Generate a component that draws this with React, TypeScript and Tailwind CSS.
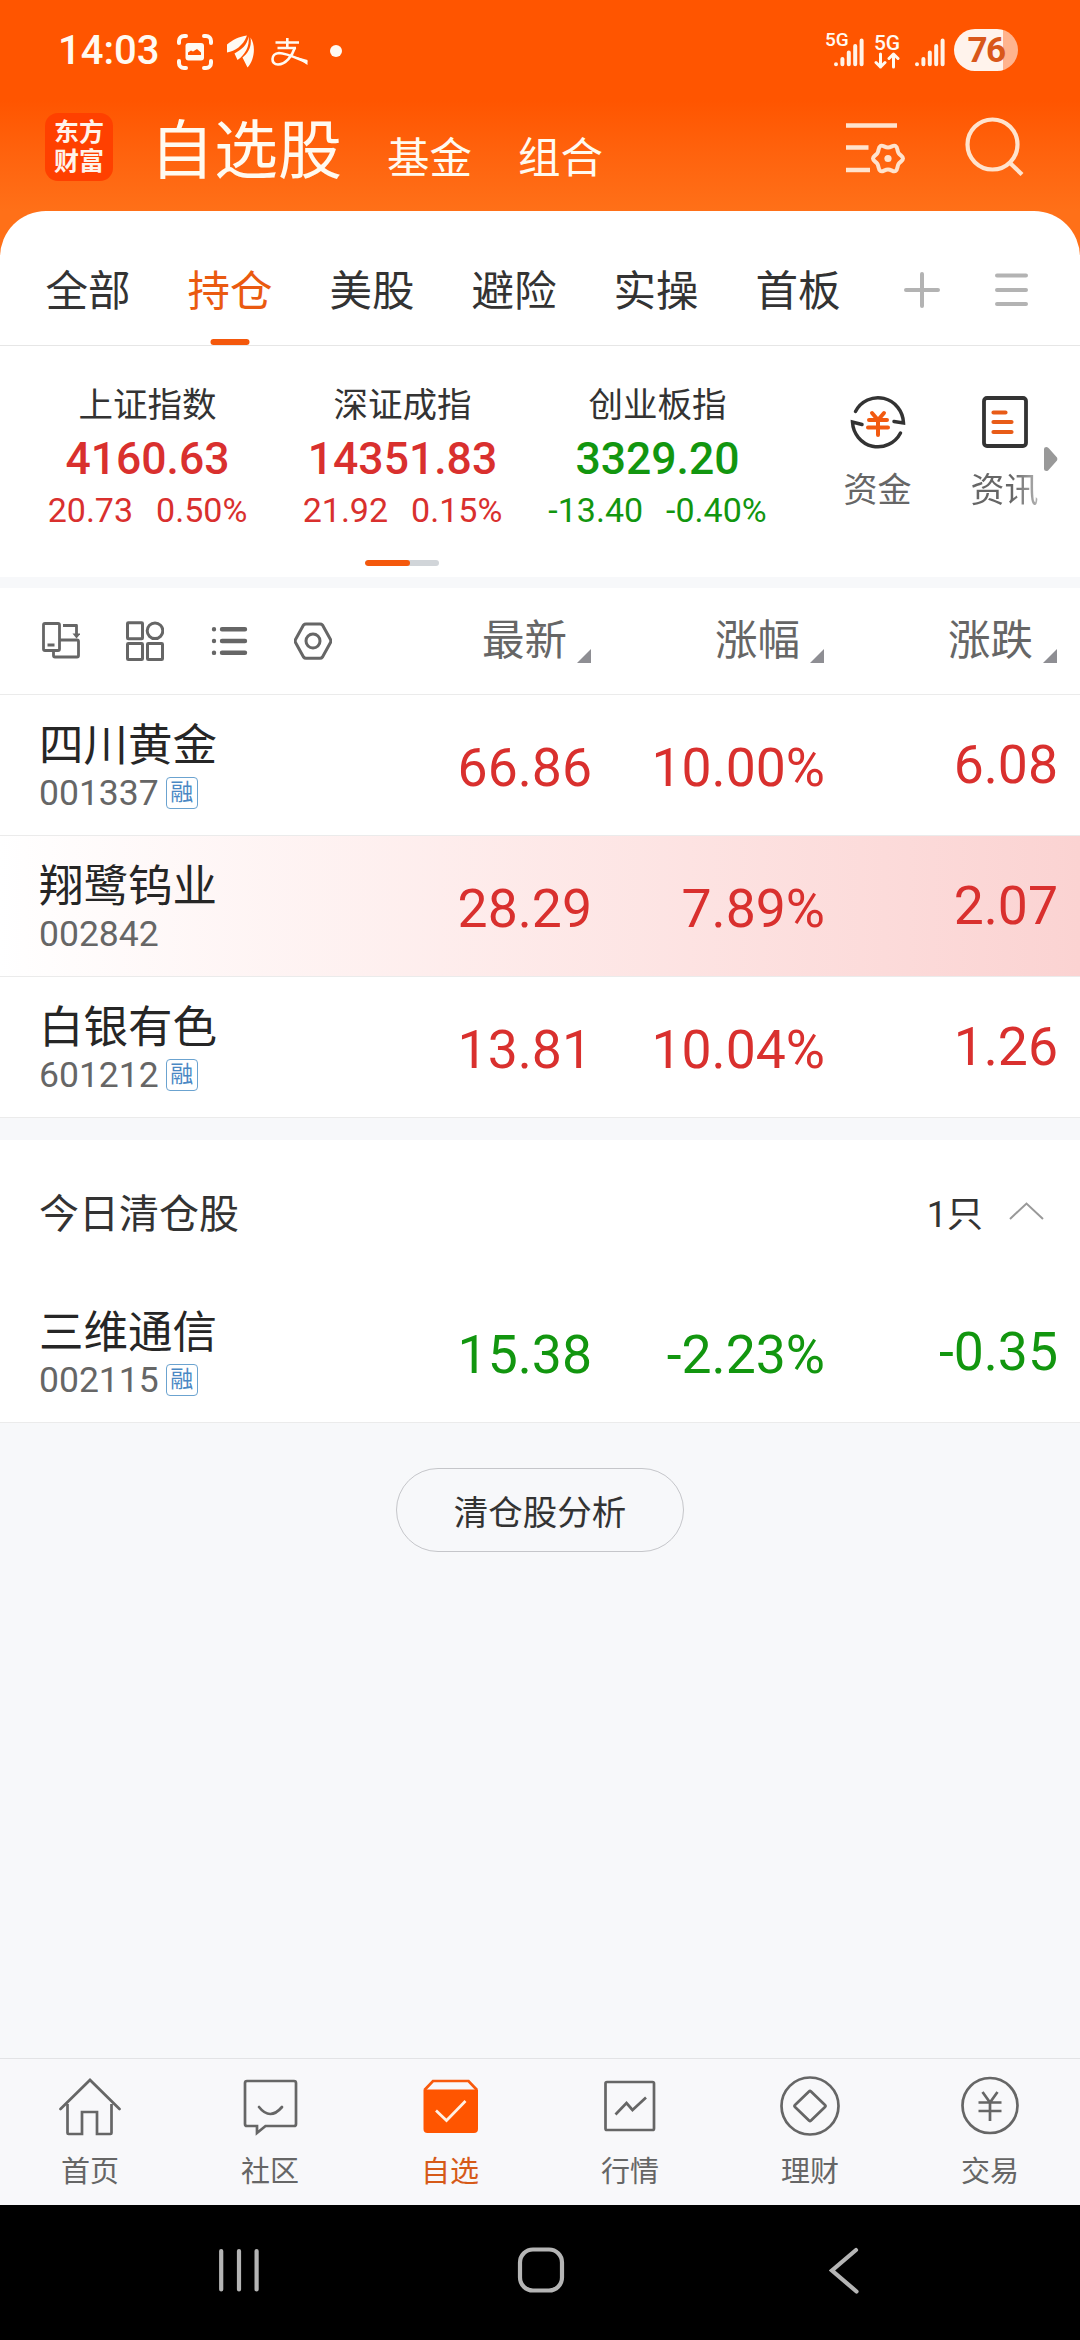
import React from 'react'

type Stock = {
    name: string
    code: string
    margin?: boolean
    price: string
    percent: string
    change: string
    down?: boolean
    flash?: boolean
}

const tabs = ['全部', '持仓', '美股', '避险', '实操', '首板']

const indices = [
    { name: '上证指数', value: '4160.63', change: '20.73', percent: '0.50%', down: false },
    { name: '深证成指', value: '14351.83', change: '21.92', percent: '0.15%', down: false },
    { name: '创业板指', value: '3329.20', change: '-13.40', percent: '-0.40%', down: true },
]

const holdings: Stock[] = [
    {
        name: '四川黄金',
        code: '001337',
        margin: true,
        price: '66.86',
        percent: '10.00%',
        change: '6.08',
    },
    {
        name: '翔鹭钨业',
        code: '002842',
        price: '28.29',
        percent: '7.89%',
        change: '2.07',
        flash: true,
    },
    {
        name: '白银有色',
        code: '601212',
        margin: true,
        price: '13.81',
        percent: '10.04%',
        change: '1.26',
    },
]

const cleared: Stock[] = [
    {
        name: '三维通信',
        code: '002115',
        margin: true,
        price: '15.38',
        percent: '-2.23%',
        change: '-0.35',
        down: true,
    },
]

const Signal: React.FC = () => (
    <svg width="30" height="30" viewBox="0 0 30 30" stroke="#fff3e8" strokeWidth="4" strokeLinecap="round">
        <path d="M2 26.2v.1M8.4 21v5.2M14.8 14.5v11.7M21.2 8v18.2M27.6 2.5v23.7" />
    </svg>
)

const StatusBar: React.FC = () => (
    <div className="h-[100px] flex items-center pl-[58px] pr-[62px] text-[#fffaf2]">
        <span className="text-[40px] leading-none font-medium w-[119px] mt-[2px]">14:03</span>
        <svg width="36" height="36" viewBox="0 0 36 36" fill="none" stroke="currentColor" strokeWidth="4" strokeLinecap="round" className="mt-[3px]">
            <path d="M2 9V7a5 5 0 0 1 5-5h2M27 2h2a5 5 0 0 1 5 5v2M34 27v2a5 5 0 0 1-5 5h-2M9 34H7a5 5 0 0 1-5-5v-2" />
            <rect x="8.500" y="9" width="18.500" height="17.500" rx="3" fill="currentColor" stroke="none" />
            <path d="M11 21v-2.500l3-2 2 1 4-2.500 4 3.500V21z" fill="#ff5500" stroke="none" />
        </svg>
        <svg width="28" height="34" viewBox="0 0 28 34" fill="currentColor" className="ml-[14px] mt-[3px]">
            <path d="M20 .5C12 1.500 6 4.500 0 9.500V17.500C8 16 16 11 20 .5z" />
            <path d="M21.500 1.500C20.500 10 14 15 7.500 18.500L10.500 25C18 20 23 11 21.500 1.500z" />
            <path d="M23.500 2.500C25 12 21 18 15.500 22.500L20.500 32.500C27 26 29.500 11 23.500 2.500z" />
        </svg>
        <svg width="37" height="28" viewBox="0 0 37 28" fill="none" stroke="currentColor" strokeWidth="2.600" className="ml-[16px] mt-[3px]">
            <path d="M4.500 4.500H28M6.500 10H25M16.300 0v10" />
            <path d="M24 9.500C21 18 15 26.500 7 26.500C-.5 26.500-.5 15.500 8 15C16 15 26 20.500 36 24.500" />
            <path d="M24 18.500L36.500 22v5z" fill="currentColor" stroke="none" />
        </svg>
        <span className="ml-[22px] mt-[2px] size-3 rounded-full bg-[#fffaf2]" />
        <div className="ml-auto flex items-center">
            <div className="relative pl-[9px] pt-[6px]">
                <span className="absolute left-0 -top-[2px] text-[19px] leading-none font-medium">5G</span>
                <Signal />
            </div>
            <div className="w-[28px] ml-[9px] mt-[3px] flex flex-col items-center">
                <span className="text-[21px] leading-[18px] font-medium">5G</span>
                <svg width="26" height="17" viewBox="0 0 26 17" fill="none" stroke="currentColor" strokeWidth="3" strokeLinecap="round" strokeLinejoin="round">
                    <path d="M6.500 2v13M2 10.500l4.500 4.500 4.500-4.500M19.500 15V2M15 6.500L19.500 2 24 6.500" />
                </svg>
            </div>
            <div className="ml-[14px] pt-[6px]">
                <Signal />
            </div>
            <div className="ml-[9px] w-16 h-[42px] rounded-full bg-gradient-to-r from-[#fff3ec] from-[76%] to-[#ffb38e] to-[76%] text-[#d9571a] text-[35px] leading-[43px] font-bold text-center tracking-[-1.500px]">
                76
            </div>
        </div>
    </div>
)

const Header: React.FC = () => (
    <div className="h-[111px] flex items-start pl-[45px] pr-[55px] pt-[13px]">
        <div className="size-[68px] rounded-[13px] bg-[#ff4000] text-[#fff3ea] text-[25px] leading-[29px] font-bold text-center pt-[5px]">
            东方
            <br />
            财富
        </div>
        <div className="flex items-baseline ml-[37px] mt-[1px] text-[#fffaf0]">
            <span className="text-[64px] leading-[76px]">自选股</span>
            <span className="ml-[45px] text-[42.500px]">基金</span>
            <span className="ml-[46px] text-[42.500px]">组合</span>
        </div>
        <svg width="60" height="54" viewBox="0 0 60 54" fill="none" stroke="#ffe3cd" strokeWidth="4.500" className="ml-auto mt-[8px]">
            <path d="M1 4.500h51M1 26.500h22.500M1 49h24" />
            <path
                strokeLinejoin="round"
                strokeWidth="4"
                d="M35.500 25c2-1.500 4 1.500 7.500 1.500s5.500-3 7.500-1.500c2.500 1.500 1.500 4.500 3 7s4.500 3 4.500 5.500-3 3-4.500 5.500-.5 5.500-3 7c-2 1.500-4-1.500-7.500-1.500s-5.500 3-7.500 1.500c-2.500-1.500-1.500-4.500-3-7S28 40 28 37.500s3-3 4.500-5.500.5-5.500 3-7z"
            />
            <circle cx="43" cy="37.500" r="3.600" fill="#ffe3cd" stroke="none" />
        </svg>
        <svg width="60" height="60" viewBox="0 0 60 60" fill="none" stroke="#ffe3cd" strokeWidth="4.200" className="ml-[60px] mt-[4px]">
            <circle cx="27.500" cy="27.500" r="25" />
            <path d="M44.500 45.500L57 57.500" />
        </svg>
    </div>
)

const TabBar: React.FC = () => (
    <div className="h-[135px] flex items-center border-b border-[#e6e6e6] pl-[17px]">
        {tabs.map((tab, i) => (
            <div
                key={tab}
                className={
                    i === 1
                        ? 'relative w-[142px] h-full flex items-center justify-center text-[42.500px] text-[#ea5a10]'
                        : 'w-[142px] h-full flex items-center justify-center text-[42.500px] text-[#333]'
                }
            >
                <span className="leading-none mt-[29px]">{tab}</span>
                {i === 1 && (
                    <span className="absolute bottom-0 left-1/2 -translate-x-1/2 w-[39px] h-[6px] rounded-full bg-[#f4580c]" />
                )}
            </div>
        ))}
        <svg width="36" height="36" viewBox="0 0 36 36" stroke="#b3b3b3" strokeWidth="4" strokeLinecap="round" className="ml-[35px] mt-[24px]">
            <path d="M18 2v32M2 18h32" />
        </svg>
        <svg width="34" height="36" viewBox="0 0 34 36" stroke="#b3b3b3" strokeWidth="4" strokeLinecap="round" className="ml-[55px] mt-[24px]">
            <path d="M2 3.500h29M2 18h29M2 32h29" />
        </svg>
    </div>
)

const IndexPanel: React.FC = () => (
    <div className="relative h-[231px] flex pl-[20px]">
        {indices.map((item) => (
            <div
                key={item.name}
                className={
                    item.down
                        ? 'w-[255px] flex flex-col items-center text-[#12960f]'
                        : 'w-[255px] flex flex-col items-center text-[#d9302e]'
                }
            >
                <span className="mt-[39px] text-[34.500px] leading-[40px] text-[#333]">{item.name}</span>
                <span className="mt-[9px] text-[44.500px] leading-[50px] font-medium">{item.value}</span>
                <div className="mt-[6px] flex gap-[23px] text-[34px] leading-[40px]">
                    <span>{item.change}</span>
                    <span>{item.percent}</span>
                </div>
            </div>
        ))}
        <div className="ml-[29px] w-[127px] flex flex-col items-center">
            <svg width="56" height="58" viewBox="0 0 56 58" fill="none" stroke="#333" strokeWidth="3.500" strokeLinecap="round" className="mt-[47px]">
                <path d="M5.500 18.500A25.500 26 0 0 1 53.500 30L44 28.500" />
                <path d="M50.500 40A25.500 26 0 0 1 2.500 29L12 31.500" />
                <path d="M22 20l6 7 6-7M19 27h18M18 34.500h20M28 27v15" stroke="#f25a10" strokeWidth="4" />
            </svg>
            <span className="mt-[19px] text-[34px] leading-[40px] text-[#666]">资金</span>
        </div>
        <div className="w-[127px] flex flex-col items-center">
            <svg width="48" height="58" viewBox="0 0 48 58" fill="none" stroke="#333" strokeWidth="3.800" strokeLinecap="round" className="mt-[47px]">
                <rect x="3" y="5" width="42" height="48" rx="3" />
                <path d="M12.500 19.500h12M12.500 29h18M12.500 39h18" stroke="#e85c18" strokeWidth="4.200" />
            </svg>
            <span className="mt-[19px] text-[34px] leading-[40px] bg-gradient-to-r from-[#666] from-60% to-[#b5b5b5] bg-clip-text text-transparent">资讯</span>
        </div>
        <svg width="14" height="24" viewBox="0 0 14 24" fill="#999" className="absolute right-[22px] top-[101px]">
            <path d="M0 2Q0 0 2.500 0Q4 0 5 1.500L13 10.500Q13.800 12 13 13.500L5 22.500Q4 24 2.500 24Q0 24 0 22z" />
        </svg>
        <div className="absolute left-[365px] bottom-[11px] w-[74px] h-[6px] rounded-full bg-[#d1d5d9] overflow-hidden">
            <div className="w-[45px] h-full rounded-full bg-[#f4580c]" />
        </div>
    </div>
)

const HeadCell: React.FC<{ label: string; className: string }> = ({ label, className }) => (
    <div className={className}>
        <span className="text-[42.500px] leading-none text-[#666]">{label}</span>
        <svg width="14" height="14" viewBox="0 0 14 14" fill="#8e8e93" className="ml-[10px] mb-[-1px] self-end">
            <path d="M14 0v14H0z" />
        </svg>
    </div>
)

const ListHead: React.FC = () => (
    <div className="h-[107px] flex items-center border-b border-[#ebebeb] pl-[42px] pr-[23px]">
        <div className="flex items-center gap-[46px] w-[300px]">
            <svg width="38" height="40" viewBox="0 0 38 40" fill="none" stroke="#666" strokeWidth="2.800" strokeLinejoin="round">
                <rect x="1.500" y="2.500" width="16" height="27" rx="1.500" />
                <path d="M5.500 24h7M11.500 30v4.500q0 1.500 1.500 1.500h22q1.500 0 1.500-1.500v-14q0-1.500-1.500-1.500H18M21 4.500h13.500v9" />
                <path d="M30.500 12.500h8L34.500 17.500z" fill="#666" stroke="none" />
            </svg>
            <svg width="38" height="40" viewBox="0 0 38 40" fill="none" stroke="#666" strokeWidth="3" strokeLinejoin="round">
                <rect x="1.500" y="1.800" width="15" height="16" rx=".8" />
                <rect x="1.500" y="22.500" width="15" height="16" rx=".8" />
                <rect x="21.500" y="22.500" width="15" height="16" rx=".8" />
                <circle cx="29" cy="9.800" r="7.800" />
            </svg>
            <svg width="38" height="40" viewBox="0 0 38 40" fill="none" stroke="#666" strokeWidth="4.400" strokeLinecap="round">
                <path d="M4 8.200v.1M4 20v.1M4 31.800v.1M12 8.200h23M12 20h23M12 31.800h23" />
            </svg>
            <svg width="38" height="40" viewBox="0 0 38 40" fill="none" stroke="#666" strokeWidth="3" strokeLinejoin="round">
                <path d="M9.500 4Q10.500 3 12 3h14q1.500 0 2.500 1l8 14.500q.6 1.500 0 3l-8 14.500q-1 1.300-2.500 1.300H12q-1.500 0-2.500-1.300l-8-14.500q-.6-1.500 0-3z" />
                <circle cx="19" cy="20" r="7" />
            </svg>
        </div>
        <HeadCell label="最新" className="flex flex-1 items-center justify-end" />
        <HeadCell label="涨幅" className="flex w-[233px] items-center justify-end" />
        <HeadCell label="涨跌" className="flex w-[233px] items-center justify-end" />
    </div>
)

const StockRow: React.FC<{ stock: Stock }> = ({ stock }) => (
    <div
        className={
            stock.flash
                ? 'h-[141px] flex items-center border-b border-[#ebebeb] pl-[39px] pr-[22px] bg-gradient-to-r from-white to-[#fbd3d2]'
                : 'h-[141px] flex items-center border-b border-[#ebebeb] pl-[39px] pr-[22px] bg-white'
        }
    >
        <div className="w-[300px] pt-[3px]">
            <div className="text-[44.500px] leading-[52px] text-[#262626]">{stock.name}</div>
            <div className="flex items-center text-[35.500px] leading-[42px] text-[#666]">
                {stock.code}
                {stock.margin && (
                    <span className="ml-[7px] size-8 rounded-[4px] border-[1.500px] border-[#6ba3d0] text-[#4a88c4] text-[23px] leading-[30px] text-center">
                        融
                    </span>
                )}
            </div>
        </div>
        <div
            className={
                stock.down
                    ? 'flex flex-1 items-center text-[53.500px] leading-none text-[#12960f]'
                    : 'flex flex-1 items-center text-[53.500px] leading-none text-[#d9302e]'
            }
        >
            <span className="flex-1 text-right pt-[5px]">{stock.price}</span>
            <span className="w-[233px] text-right pt-[5px]">{stock.percent}</span>
            <span className="w-[233px] text-right pb-[1px]">{stock.change}</span>
        </div>
    </div>
)

const navItems = [
    {
        label: '首页',
        icon: (
            <>
                <path d="M1.500 33L31 4l29.500 29" strokeLinecap="round" />
                <path d="M8.500 28v29q0 1 1 1h13.500V36h15v22h13.500q1 0 1-1V28" />
            </>
        ),
    },
    {
        label: '社区',
        icon: (
            <>
                <path d="M8 5h47q2 0 2 2v41q0 2-2 2H26.500l-8.500 7v-7H8q-2 0-2-2V7q0-2 2-2z" />
                <path d="M20 31q11 14 23 0" strokeLinecap="round" />
            </>
        ),
    },
    {
        label: '自选',
        icon: (
            <>
                <path d="M5.500 14L14 5h35.500l8.500 9" stroke="#f85a0c" />
                <path d="M4.500 13.500h54.500v39.500q0 4-4 4h-46.500q-4 0-4-4z" fill="#ff5500" stroke="none" />
                <path d="M17 34.500l10.500 10L46.500 25" stroke="#fff0e4" />
            </>
        ),
    },
    {
        label: '行情',
        icon: (
            <>
                <rect x="6.500" y="6" width="48.500" height="48" rx="1.500" />
                <path d="M16.500 38.500L27.500 27l6 7L47 21.500" />
            </>
        ),
    },
    {
        label: '理财',
        icon: (
            <>
                <circle cx="31" cy="30" r="28.500" />
                <path d="M30 15.500q1-1 2 0l14 13.500q1 1 0 2L32 44.500q-1 1-2 0L16 31q-1-1 0-2z" />
            </>
        ),
    },
    {
        label: '交易',
        icon: (
            <>
                <circle cx="31" cy="29.500" r="27.500" />
                <path d="M23.500 16l7.500 10.500L38.500 16M19.500 26.500h23M19.500 35h23M31 26.500V45" />
            </>
        ),
    },
]

const BottomNav: React.FC = () => (
    <div className="h-[147px] flex border-t border-[#e2e3e5] bg-[#f8f8fa]">
        {navItems.map((item) => (
            <div key={item.label} className="w-[180px] flex flex-col items-center pt-[17px]">
                <svg width="62" height="62" viewBox="0 0 62 62" fill="none" stroke="#666" strokeWidth="2.700">
                    {item.icon}
                </svg>
                <span
                    className={
                        item.label === '自选'
                            ? 'mt-[17px] text-[29px] leading-[34px] text-[#d65a18]'
                            : 'mt-[17px] text-[29px] leading-[34px] text-[#666]'
                    }
                >
                    {item.label}
                </span>
            </div>
        ))}
    </div>
)

const SystemNav: React.FC = () => (
    <div className="h-[135px] flex items-center pl-[215px] bg-black pb-[5px]">
        <svg width="46" height="48" viewBox="0 0 46 48" stroke="#b5b5b5" strokeWidth="4.200" strokeLinecap="round">
            <path d="M6.200 5v38.500M24 5v38.500M41.600 5v38.500" />
        </svg>
        <svg width="48" height="48" viewBox="0 0 48 48" fill="none" stroke="#b5b5b5" strokeWidth="4.200" className="ml-[256px]">
            <rect x="3" y="3.500" width="42" height="41" rx="13" />
        </svg>
        <svg width="32" height="48" viewBox="0 0 32 48" fill="none" stroke="#b5b5b5" strokeWidth="4.200" strokeLinecap="round" className="ml-[264px]">
            <path d="M27 4L3 24.500l24.500 21" />
        </svg>
    </div>
)

const App: React.FC = () => {
    return (
        <div className="w-[1080px] h-[2340px] flex flex-col overflow-hidden bg-[#f7f8fa] font-['Roboto','Noto_Sans_CJK_SC',sans-serif]">
            <header className="bg-gradient-to-b from-[#ff5500] from-[29%] to-[#ff7018] to-[61%]">
                <StatusBar />
                <Header />
                <div className="bg-white rounded-t-[46px]">
                    <TabBar />
                </div>
            </header>
            <div className="bg-white">
                <IndexPanel />
            </div>
            <div className="mt-[11px] bg-white">
                <ListHead />
                {holdings.map((stock) => (
                    <StockRow key={stock.code} stock={stock} />
                ))}
            </div>
            <div className="mt-[22px] bg-white">
                <div className="h-[142px] flex items-center pl-[39px] pr-[36px] pt-[8px] text-[#333]">
                    <span className="text-[40px]">今日清仓股</span>
                    <span className="ml-auto text-[36px]">1只</span>
                    <svg width="36" height="20" viewBox="0 0 36 20" fill="none" stroke="#999" strokeWidth="2" className="ml-[25px] mb-[8px]">
                        <path d="M2 18L18.500 2.500 35 18" />
                    </svg>
                </div>
                {cleared.map((stock) => (
                    <StockRow key={stock.code} stock={stock} />
                ))}
            </div>
            <button className="mt-[45px] self-center w-[288px] h-[84px] rounded-full border border-[#c5c6ca] text-[34.500px] text-[#333] pt-[8px]">
                清仓股分析
            </button>
            <div className="mt-auto">
                <BottomNav />
                <SystemNav />
            </div>
        </div>
    )
}

export default App
